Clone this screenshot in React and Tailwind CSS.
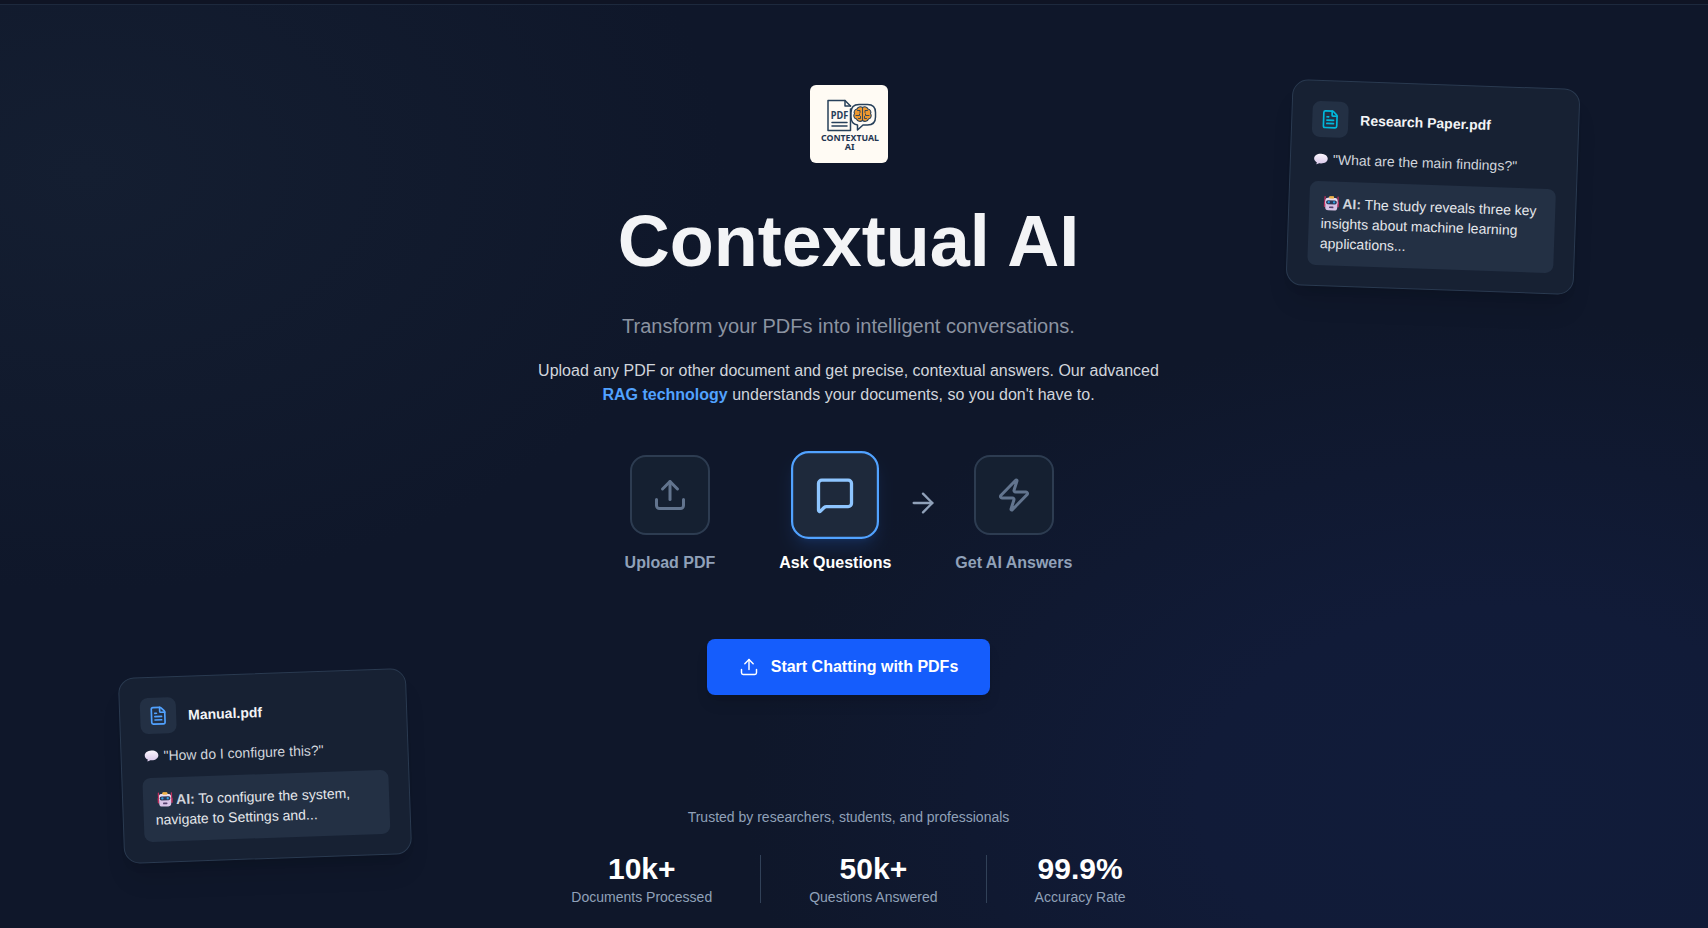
import { Upload, MessageSquare, Zap, ArrowRight, FileText } from "lucide-react";

function SpeechEmoji() {
  return (
    <svg viewBox="0 0 16 16" className="mr-1 ml-0.5 inline-block size-4 align-[-3px]">
      <defs>
        <linearGradient id="speech" x1="0" y1="0" x2="0" y2="1">
          <stop offset="0" stopColor="#fbf6fd" />
          <stop offset="1" stopColor="#d9c8ea" />
        </linearGradient>
      </defs>
      <path d="M8 2.6c3.900 0 6.800 2 6.800 4.900s-2.900 4.900-6.800 4.900c-.6 0-1.200 0-1.700-.1-.7.600-1.900 1-3 .9.600-.5.8-1.100.8-1.700C2.300 10.600 1.200 9.200 1.200 7.500 1.200 4.600 4.100 2.600 8 2.600z" fill="url(#speech)" />
    </svg>
  );
}

function RobotEmoji() {
  return (
    <svg viewBox="0 0 16 16" className="mr-[3px] ml-0.5 inline-block size-4 align-[-3px]">
      <path d="M1.500 1.500v7M14.500 1.500v7" stroke="#c2305f" strokeWidth="1.300" strokeLinecap="round" />
      <rect x="5.500" y=".8" width="5" height="3" rx="1" fill="#f0b248" />
      <path d="M1.300 7v4M14.700 7v4" stroke="#c2305f" strokeWidth="1.600" strokeLinecap="round" />
      <rect x="2" y="2.500" width="12" height="12.500" rx="3" fill="#d9c3e6" />
      <path d="M2 8.500V5.500a3 3 0 0 1 3-3h6a3 3 0 0 1 3 3v3z" fill="#e9dcf1" />
      <rect x="5.500" y="1" width="5" height="2.200" rx="1" fill="#f0b248" />
      <rect x="2.600" y="4.800" width="10.800" height="4" rx="1.800" fill="#2b3556" />
      <circle cx="5.300" cy="6.800" r="1.200" fill="#2f9fe0" />
      <circle cx="10.700" cy="6.800" r="1.200" fill="#2f9fe0" />
      <rect x="5.800" y="11" width="4.400" height="1.700" rx=".6" fill="#56406e" />
    </svg>
  );
}

function Logo() {
  return (
    <svg viewBox="0 0 78 78" className="size-[78px] rounded-md">
      <rect width="78" height="78" fill="#fffbf4" />
      <g fill="none" stroke="#27405a" strokeWidth="1.500" strokeLinejoin="round" strokeLinecap="round">
        <path d="M40.500 24v21.500H18v-30h17l5.500 5.500" />
        <path d="M35 15.500v5.500h5.500" />
        <path d="M22 37.500h15M22 41h15" />
        <path d="M49 19.500h8.500q8 0 8 8v4.500q0 8-8 8h-4.500l-5.500 5v-5q-6.500-1-6.500-8v-4.500q0-8 8-8z" fill="#fffbf4" />
        <path d="M52.500 22.500c-2-1.500-5-.5-5.500 1.500-2.500.5-3.500 3-2.500 4.500-1.500 2-.5 5 2 5.500 1 2.500 4 3 6 1.500 2 1.500 5 1 6-1.500 2.500-.5 3.500-3.500 2-5.500 1-1.500 0-4-2.500-4.500-.5-2-3.500-3-5.500-1.500z" fill="#ed982f" strokeWidth="1.100" />
        <path d="M52.500 22.500v13M47.500 25.500h2.500v2M46 30.500h3.500v-1.500M48.500 33.500h2v-2M57.500 25.500h-2.500v2M59 30.500h-3.500v-1.500M56.500 33.500h-2v-2" strokeWidth=".9" />
      </g>
      <text x="29.500" y="34" textAnchor="middle" fontSize="11" fontWeight="700" fill="#27405a" fontFamily="Noto Sans, sans-serif" textLength="17.500" lengthAdjust="spacingAndGlyphs">PDF</text>
      <text x="40" y="56.300" textAnchor="middle" fontSize="9" fontWeight="700" fill="#1f3651" fontFamily="Noto Sans, sans-serif" textLength="58" lengthAdjust="spacingAndGlyphs">CONTEXTUAL</text>
      <text x="39.700" y="65.200" textAnchor="middle" fontSize="9" fontWeight="700" fill="#1f3651" fontFamily="Noto Sans, sans-serif">AI</text>
    </svg>
  );
}

function DocCard({ title, question, answer, iconClass, className }) {
  return (
    <div className={"absolute w-72 rounded-2xl border border-[#2a3a50] bg-[#172133] p-5 shadow-xl " + className}>
      <div className="mb-3 flex items-center gap-3">
        <div className="flex size-9 items-center justify-center rounded-lg bg-[#233044]">
          <FileText className={"size-5 " + iconClass} />
        </div>
        <span className="text-sm font-bold text-gray-100">{title}</span>
      </div>
      <p className="mb-3 text-sm text-gray-300"><SpeechEmoji />"{question}"</p>
      <div className="rounded-lg bg-[#233044] p-3 text-sm text-gray-200">
        <RobotEmoji /><strong className="text-gray-300">AI:</strong> {answer}
      </div>
    </div>
  );
}

function Step({ icon: Icon, label, active }) {
  return (
    <div className="flex flex-col items-center">
      <div className={active
        ? "flex size-20 scale-110 items-center justify-center rounded-2xl border-2 border-[#51a2ff] bg-[#1e293b] shadow-lg shadow-blue-500/15"
        : "flex size-20 items-center justify-center rounded-2xl border-2 border-[#2d3c51] bg-[#152031]"}>
        <Icon className={active ? "size-9 text-[#8ec5ff]" : "size-9 text-[#62748e]"} />
      </div>
      <span className={active ? "mt-4 font-bold text-white" : "mt-4 font-bold text-[#90a1b9]"}>{label}</span>
    </div>
  );
}

function Stat({ value, label }) {
  return (
    <div className="text-center">
      <div className="text-3xl font-bold text-white">{value}</div>
      <div className="text-sm text-[#90a1b9]">{label}</div>
    </div>
  );
}

export default function App() {
  return (
    <div className="relative flex h-[928px] flex-col overflow-hidden bg-[#0f172a] font-['Liberation_Sans',Arial,sans-serif]">
      <header className="h-[5px] shrink-0 border-b border-[#1d293d] bg-[#0f1424]" />
      <div className="flex flex-1 flex-col items-center bg-[radial-gradient(ellipse_640px_420px_at_5%_18%,#141e31_0%,transparent_100%),radial-gradient(ellipse_760px_480px_at_88%_86%,#111c3a_0%,#111b38_40%,transparent_100%)] pt-20 pr-[11px]">
        <Logo />
        <h1 className="mt-[42px] text-7xl leading-[72px] font-bold text-gray-100">Contextual AI</h1>
        <p className="mt-[35px] text-xl text-[#8b93a1]">Transform your PDFs into intelligent conversations.</p>
        <p className="mt-[19px] w-[640px] text-center text-base text-gray-300">
          Upload any PDF or other document and get precise, contextual answers. Our advanced <strong className="text-[#51a2ff]">RAG technology</strong> understands your documents, so you don't have to.
        </p>
        <div className="mt-12 flex items-start">
          <Step icon={Upload} label="Upload PDF" />
          <div className="w-16" />
          <Step icon={MessageSquare} label="Ask Questions" active />
          <div className="flex w-16 justify-center pt-8"><ArrowRight className="size-8 text-[#90a1b9]" strokeWidth={1.75} /></div>
          <Step icon={Zap} label="Get AI Answers" />
        </div>
        <button className="mt-16 flex h-14 w-[283px] shrink-0 items-center justify-center gap-3 rounded-lg bg-[#155dfc] font-bold text-white shadow-lg">
          <Upload className="size-5" strokeWidth={1.75} />Start Chatting with PDFs
        </button>
        <p className="mt-28 text-sm text-[#90a1b9]">Trusted by researchers, students, and professionals</p>
        <div className="mt-6 flex items-center gap-12">
          <Stat value="10k+" label="Documents Processed" />
          <div className="h-12 w-px bg-[#314158]" />
          <Stat value="50k+" label="Questions Answered" />
          <div className="h-12 w-px bg-[#314158]" />
          <Stat value="99.9%" label="Accuracy Rate" />
        </div>
      </div>
      <DocCard title="Research Paper.pdf" question="What are the main findings?" answer="The study reveals three key insights about machine learning applications..." iconClass="text-[#00b8db]" className="top-[84px] left-[1289px] rotate-2" />
      <DocCard title="Manual.pdf" question="How do I configure this?" answer="To configure the system, navigate to Settings and..." iconClass="text-[#51a2ff]" className="top-[673px] left-[121px] -rotate-2" />
    </div>
  );
}
